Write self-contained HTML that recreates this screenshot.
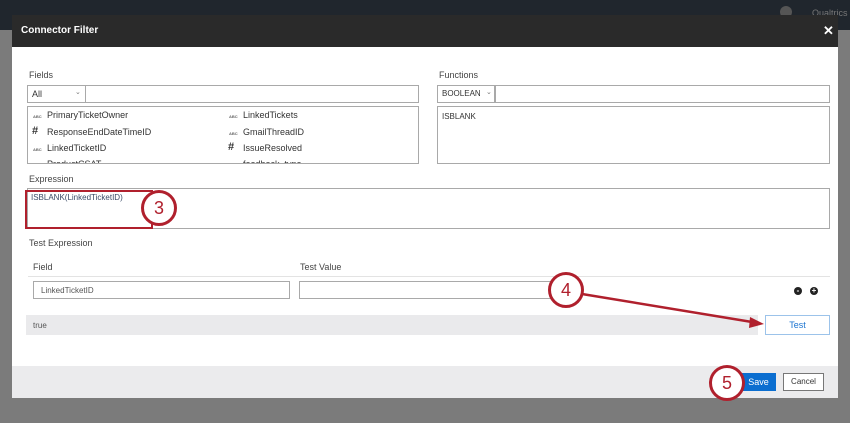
<!DOCTYPE html>
<html><head><style>
*{margin:0;padding:0;box-sizing:border-box}
body{width:850px;height:423px;background:#7b7b7b;position:relative;overflow:hidden;font-family:"Liberation Sans",sans-serif;font-size:9px;color:#333}
.a{position:absolute}
.box{position:absolute;background:#fff;border:1px solid #a9a9a9}
.lbl{position:absolute;font-size:9px;color:#444}
.it{position:absolute;font-size:9px;color:#333}
.abc{position:absolute;font-size:4px;color:#666;font-weight:bold}
.hash{position:absolute;font-size:11px;font-weight:bold;color:#333}
.circ{position:absolute;width:36px;height:36px;border:3px solid #b0202d;border-radius:50%;background:#fff;color:#b0202d;font-size:18px;text-align:center;line-height:30px}
.dot{position:absolute;width:8px;height:8px;border-radius:50%;background:#222;color:#fff;font-size:8px;line-height:8px;text-align:center;font-weight:bold}
</style></head><body>
<div class="a" style="left:0;top:0;width:850px;height:30px;background:#20262d"></div>
<div class="a" style="left:780px;top:6px;width:12px;height:12px;border-radius:50%;background:#555"></div>
<div class="a" style="left:812px;top:8px;color:#777;font-size:9px">Qualtrics</div>
<div class="a" style="left:12px;top:15px;width:826px;height:383px;background:#fff"></div>
<div class="a" style="left:12px;top:15px;width:826px;height:32px;background:#2a2a2a"></div>
<div class="a" style="left:21px;top:25px;color:#fff;font-size:10px;font-weight:bold">Connector Filter</div>
<div class="a" style="left:823px;top:23px;color:#fff;font-size:13px;font-weight:bold">✕</div>

<div class="lbl" style="left:29px;top:70px">Fields</div>
<div class="box" style="left:27px;top:85px;width:59px;height:18px"></div>
<div class="it" style="left:32px;top:89px">All</div>
<div class="it" style="left:75px;top:88px;font-size:7px;color:#777">⌄</div>
<div class="box" style="left:85px;top:85px;width:334px;height:18px"></div>
<div class="box" style="left:27px;top:106px;width:392px;height:58px;overflow:hidden">
<div class="abc" style="left:5px;top:7px">ABC</div><div class="it" style="left:19px;top:3px">PrimaryTicketOwner</div>
<div class="hash" style="left:4px;top:18px">#</div><div class="it" style="left:19px;top:20px">ResponseEndDateTimeID</div>
<div class="abc" style="left:5px;top:40px">ABC</div><div class="it" style="left:19px;top:36px">LinkedTicketID</div>
<div class="it" style="left:19px;top:52px">ProductCSAT</div>
<div class="abc" style="left:201px;top:7px">ABC</div><div class="it" style="left:215px;top:3px">LinkedTickets</div>
<div class="abc" style="left:201px;top:24px">ABC</div><div class="it" style="left:215px;top:20px">GmailThreadID</div>
<div class="hash" style="left:200px;top:34px">#</div><div class="it" style="left:215px;top:36px">IssueResolved</div>
<div class="it" style="left:215px;top:52px">feedback_type</div>
</div>

<div class="lbl" style="left:439px;top:70px">Functions</div>
<div class="box" style="left:437px;top:85px;width:58px;height:18px"></div>
<div class="it" style="left:442px;top:89px;font-size:8px">BOOLEAN</div>
<div class="it" style="left:486px;top:88px;font-size:7px;color:#777">⌄</div>
<div class="box" style="left:495px;top:85px;width:335px;height:18px"></div>
<div class="box" style="left:437px;top:106px;width:393px;height:58px"></div>
<div class="it" style="left:442px;top:112px;font-size:8px">ISBLANK</div>

<div class="lbl" style="left:29px;top:174px">Expression</div>
<div class="box" style="left:27px;top:188px;width:803px;height:41px"></div>
<div class="it" style="left:31px;top:193px;color:#3a4a66;font-size:8px">ISBLANK(LinkedTicketID)</div>
<div class="a" style="left:25px;top:190px;width:128px;height:39px;border:2px solid #b0202d"></div>
<div class="circ" style="left:141px;top:190px">3</div>

<div class="lbl" style="left:29px;top:238px">Test Expression</div>
<div class="lbl" style="left:33px;top:262px">Field</div>
<div class="lbl" style="left:300px;top:262px">Test Value</div>
<div class="a" style="left:28px;top:276px;width:802px;height:1px;background:#e3e3e3"></div>
<div class="box" style="left:33px;top:281px;width:257px;height:18px"></div>
<div class="it" style="left:41px;top:286px;font-size:8px;color:#555">LinkedTicketID</div>
<div class="box" style="left:299px;top:281px;width:262px;height:18px"></div>
<div class="dot" style="left:794px;top:287px">-</div>
<div class="dot" style="left:810px;top:287px">+</div>
<div class="a" style="left:26px;top:315px;width:732px;height:20px;background:#eaeaec"></div>
<div class="it" style="left:33px;top:321px;font-size:8px;color:#555">true</div>
<div class="a" style="left:765px;top:315px;width:65px;height:20px;border:1px solid #9cc3ea;background:#fff;color:#1a73d0;text-align:center;line-height:18px;font-size:9px">Test</div>
<svg class="a" style="left:0;top:0" width="850" height="423"><line x1="582" y1="294" x2="752" y2="322" stroke="#b0202d" stroke-width="2.5"/><polygon points="764,324 750,317 749,328" fill="#b0202d"/></svg>
<div class="circ" style="left:548px;top:272px">4</div>

<div class="a" style="left:12px;top:366px;width:826px;height:32px;background:#ebebed"></div>
<div class="a" style="left:741px;top:373px;width:35px;height:18px;background:#0b6ed0;color:#fff;text-align:center;line-height:18px;font-size:9px">Save</div>
<div class="a" style="left:783px;top:373px;width:41px;height:18px;background:#fff;border:1px solid #777;text-align:center;line-height:16px;font-size:8px;color:#333">Cancel</div>
<div class="circ" style="left:709px;top:365px">5</div>
</body></html>
